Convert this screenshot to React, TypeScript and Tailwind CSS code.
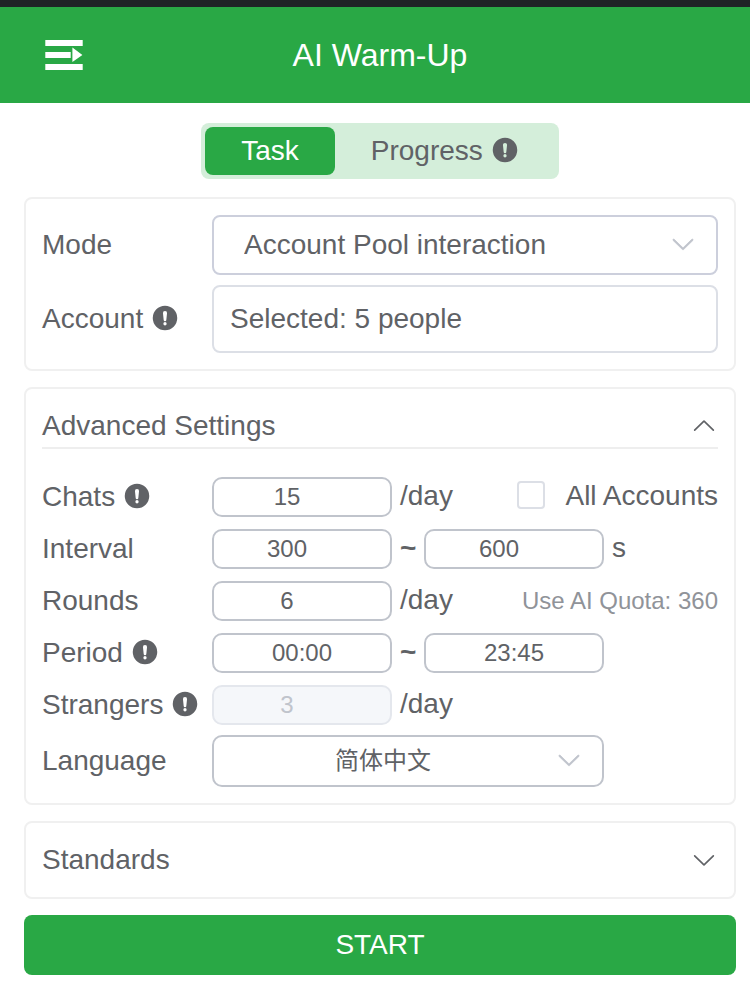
import { useState, type ReactNode } from "react";
import { clsx } from "clsx";

function InfoIcon() {
  return (
    <svg viewBox="0 0 1024 1024" className="mb-0.5 size-7 shrink-0" fill="currentColor" aria-hidden="true">
      <path d="M512 64a448 448 0 1 1 0 896 448 448 0 0 1 0-896m0 188a74 74 0 0 0-74 82l26 250a48 48 0 0 0 96 0l26-250A74 74 0 0 0 512 252m0 530a60 60 0 1 0 0-120 60 60 0 0 0 0 120" />
    </svg>
  );
}

function Chevron({ className }: { className?: string }) {
  return (
    <svg viewBox="0 0 1024 1024" className={clsx("size-7 shrink-0", className)} fill="currentColor" aria-hidden="true">
      <path d="M831.872 340.864 512 652.672 192.128 340.864a30.592 30.592 0 0 0-42.752 0 29.12 29.12 0 0 0 0 41.6L489.664 714.24a32 32 0 0 0 44.672 0l340.288-331.712a29.12 29.12 0 0 0 0-41.728 30.592 30.592 0 0 0-42.752 0z" />
    </svg>
  );
}

function MenuIcon() {
  return (
    <svg viewBox="0 0 48 48" className="size-12" fill="currentColor" aria-hidden="true">
      <path d="M5.3 9h37.4v6H5.3zM5.3 21h25.4v6H5.3zM5.3 33h37.4v6H5.3zM32.4 16.4 42.4 24 32.4 31z" />
    </svg>
  );
}

function Card({ children }: { children: ReactNode }) {
  return <section className="rounded-lg border-2 border-[#f0f0f0] px-4">{children}</section>;
}

type RowProps = { id: string; label: string; info?: boolean; children: ReactNode };

function Row({ id, label, info, children }: RowProps) {
  return (
    <div className="flex items-center">
      <label htmlFor={id} className="flex w-[170px] shrink-0 items-center gap-2 pb-px leading-9">
        {label}
        {info && <InfoIcon />}
      </label>
      <div className="flex min-w-0 flex-1 items-center gap-2">{children}</div>
    </div>
  );
}

type FieldProps = { id: string; value: string; time?: boolean; disabled?: boolean; label?: string };

function Field({ id, value, time, disabled, label }: FieldProps) {
  return (
    <input
      id={id}
      type="text"
      inputMode="numeric"
      aria-label={label}
      defaultValue={value}
      disabled={disabled}
      className={clsx(
        "h-10 w-[180px] min-w-0 rounded-[10px] border-2 text-center text-2xl outline-none",
        !time && "pr-[30px]",
        disabled ? "border-[#e4e7ed] bg-[#f5f7fa] text-[#c0c4cc]" : "border-[#c0c4cc] bg-white",
      )}
    />
  );
}

function Unit({ children }: { children: ReactNode }) {
  return <span className="pb-0.5 leading-9">{children}</span>;
}

function Tilde() {
  return <span className="w-4 pb-0.5 leading-9 font-bold">~</span>;
}

export default function App() {
  const [tab, setTab] = useState("task");
  const [open, setOpen] = useState(true);

  return (
    <div className="bg-white pb-[9px] font-['Liberation_Sans','Noto_Sans_CJK_SC',sans-serif] text-[28px] text-[#606266]">
      <div className="h-[7px] bg-[#1f2326]" />
      <header className="grid h-24 grid-cols-[80px_1fr_80px] items-center bg-[#29a845] pr-3.5 pl-6 text-white">
        <button type="button" aria-label="Menu" className="ml-4 w-12">
          <MenuIcon />
        </button>
        <h1 className="text-center text-[32px] leading-10">AI Warm-Up</h1>
      </header>

      <main className="flex flex-col gap-4 pt-5 pr-3.5 pl-6">
        <div className="mb-0.5 flex self-center rounded-lg bg-[#d4eeda] p-1">
          <button
            type="button"
            onClick={() => setTab("task")}
            className={clsx("h-12 rounded-lg px-9", tab === "task" && "bg-[#29a845] text-white")}
          >
            Task
          </button>
          <button
            type="button"
            onClick={() => setTab("progress")}
            className={clsx(
              "flex h-12 items-center gap-2 rounded-lg px-9",
              tab === "progress" && "bg-[#29a845] text-white",
            )}
          >
            Progress
            <InfoIcon />
          </button>
        </div>

        <Card>
          <div className="flex flex-col gap-2.5 py-4">
            <Row id="mode" label="Mode">
              <div className="relative flex-1">
                <select
                  id="mode"
                  className="h-[60px] w-full appearance-none rounded-lg border-2 border-[#cccfdc] bg-white pr-14 pl-[30px] outline-none"
                >
                  <option>Account Pool interaction</option>
                </select>
                <Chevron className="pointer-events-none absolute top-[15px] right-[21px] stroke-[#c0c4cc] stroke-[24] text-[#c0c4cc]" />
              </div>
            </Row>
            <Row id="account" label="Account" info>
              <input
                id="account"
                readOnly
                value="Selected: 5 people"
                className="h-[68px] min-w-0 flex-1 rounded-lg border-2 border-[#dcdfe6] bg-white px-4 outline-none"
              />
            </Row>
          </div>
        </Card>

        <Card>
          <div className="py-4">
            <button
              type="button"
              aria-expanded={open}
              onClick={() => setOpen(!open)}
              className="flex h-11 w-full items-center justify-between border-b-2 border-[#eeeeee]"
            >
              Advanced Settings
              <Chevron className={clsx(open && "rotate-180")} />
            </button>
            {open && (
              <div className="flex flex-col gap-2.5 pt-7">
                <div className="flex flex-col gap-3">
                  <Row id="chats" label="Chats" info>
                    <Field id="chats" value="15" />
                    <Unit>/day</Unit>
                    <label className="ml-auto flex items-center gap-5 pb-0.5 leading-9">
                      <input
                        type="checkbox"
                        className="mb-0.5 size-7 appearance-none rounded-sm border-2 border-[#dcdfe6] bg-white checked:bg-[#29a845]"
                      />
                      All Accounts
                    </label>
                  </Row>
                  <Row id="interval" label="Interval">
                    <Field id="interval" value="300" />
                    <Tilde />
                    <Field id="interval-max" value="600" label="Longest interval" />
                    <Unit>s</Unit>
                  </Row>
                  <Row id="rounds" label="Rounds">
                    <Field id="rounds" value="6" />
                    <Unit>/day</Unit>
                    <span className="ml-auto text-2xl text-[#909399]">Use AI Quota: 360</span>
                  </Row>
                  <Row id="period" label="Period" info>
                    <Field id="period" value="00:00" time />
                    <Tilde />
                    <Field id="period-end" value="23:45" time label="Period end" />
                  </Row>
                  <Row id="strangers" label="Strangers" info>
                    <Field id="strangers" value="3" disabled />
                    <Unit>/day</Unit>
                  </Row>
                </div>
                <Row id="language" label="Language">
                  <div className="relative w-[392px]">
                    <select
                      id="language"
                      className="h-[52px] w-full appearance-none rounded-[10px] border-2 border-[#c0c4cc] bg-white pr-20 pl-[30px] text-center text-2xl outline-none"
                    >
                      <option>简体中文</option>
                    </select>
                    <Chevron className="pointer-events-none absolute top-[11px] right-[21px] stroke-[#c0c4cc] stroke-[24] text-[#c0c4cc]" />
                  </div>
                </Row>
              </div>
            )}
          </div>
        </Card>

        <Card>
          <button type="button" className="flex h-[74px] w-full items-center justify-between">
            Standards
            <Chevron />
          </button>
        </Card>

        <button type="button" className="h-[60px] rounded-lg bg-[#29a845] text-white">
          START
        </button>
      </main>
    </div>
  );
}
